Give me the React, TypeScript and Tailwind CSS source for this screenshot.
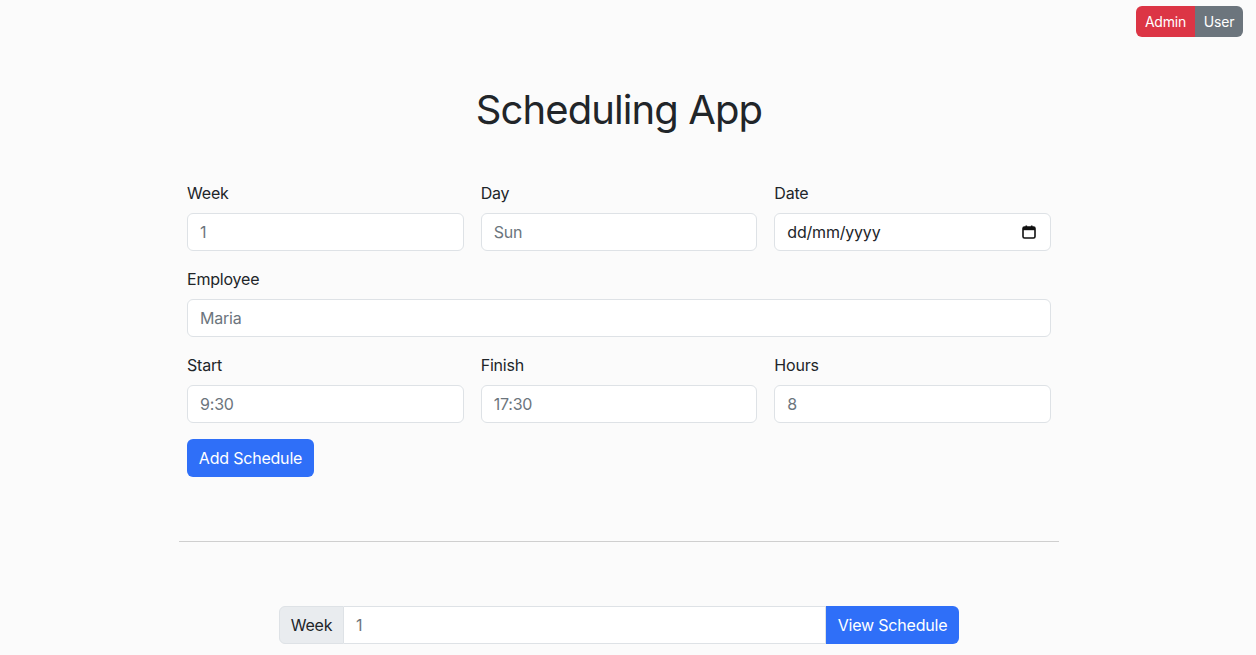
import React from "react";

const inputCls =
  "block w-full h-[38px] rounded-[6px] border border-[#dee2e6] bg-white px-3 text-[16px] text-[#212529] placeholder:text-[#6c757d] outline-none tracking-[-0.2px]";

function Field({ label, placeholder }: { label: string; placeholder?: string }) {
  return (
    <div className="flex flex-col">
      <label className="mb-2 text-[16px] leading-6 tracking-[-0.2px] text-[#212529]">{label}</label>
      <input type="text" placeholder={placeholder} className={inputCls} />
    </div>
  );
}

export default function App() {
  return (
    <div
      className="min-h-[655px] w-full bg-[#fbfbfb] text-[#212529]"
      style={{ fontFamily: "Inter, 'Noto Sans', sans-serif" }}
    >
      <div className="flex justify-end pt-[6px] pr-[13px]">
        <button className="h-[31px] w-[59px] rounded-l-[6px] bg-[#dc3545] text-[14px] tracking-[-0.2px] text-white">Admin</button>
        <button className="h-[31px] w-[48px] rounded-r-[6px] bg-[#6c757d] text-[14px] tracking-[-0.2px] text-white">User</button>
      </div>

      <div className="pr-[18px]">
        <div className="mx-auto w-[880px]">
          <h1 className="mt-[49px] text-center text-[40px] font-normal leading-[48px] tracking-[-0.9px]">Scheduling App</h1>

          <div className="mt-[47px] px-2">
            <div className="grid grid-cols-3 gap-x-[17px]">
              <Field label="Week" placeholder="1" />
              <Field label="Day" placeholder="Sun" />
              <div className="flex flex-col">
                <label className="mb-2 text-[16px] leading-6 tracking-[-0.2px]">Date</label>
                <div className={inputCls + " flex items-center justify-between"}>
                  <span>dd/mm/yyyy</span>
                  <svg width="14" height="14" viewBox="0 0 14 14" className="mr-[2px]">
                    <rect x="1" y="2" width="12" height="11" rx="1.5" fill="none" stroke="#111" strokeWidth="1.6" />
                    <rect x="1" y="2" width="12" height="3.2" fill="#111" />
                    <rect x="3.5" y="0.5" width="1.6" height="2.5" fill="#111" />
                    <rect x="8.9" y="0.5" width="1.6" height="2.5" fill="#111" />
                  </svg>
                </div>
              </div>
            </div>

            <div className="mt-4">
              <Field label="Employee" placeholder="Maria" />
            </div>

            <div className="mt-4 grid grid-cols-3 gap-x-[17px]">
              <Field label="Start" placeholder="9:30" />
              <Field label="Finish" placeholder="17:30" />
              <Field label="Hours" placeholder="8" />
            </div>

            <button className="mt-4 h-[38px] w-[127px] rounded-[6px] bg-[#2f6ff8] text-[16px] tracking-[-0.2px] text-white">Add Schedule</button>
          </div>

          <hr className="mt-[64px] border-t border-[#cfcfcf]" />

          <div className="mx-auto mt-[64px] flex h-[38px] w-[680px]">
            <span className="flex w-[65px] items-center justify-center rounded-l-[6px] border border-[#dee2e6] bg-[#e9ecef] text-[16px] tracking-[-0.2px]">Week</span>
            <input
              placeholder="1"
              className="h-[38px] min-w-0 flex-1 border border-l-0 border-[#dee2e6] bg-white px-3 text-[16px] placeholder:text-[#6c757d] outline-none"
            />
            <button className="h-[38px] w-[133px] rounded-r-[6px] bg-[#2f6ff8] text-[16px] tracking-[-0.2px] text-white">View Schedule</button>
          </div>
        </div>
      </div>
    </div>
  );
}
